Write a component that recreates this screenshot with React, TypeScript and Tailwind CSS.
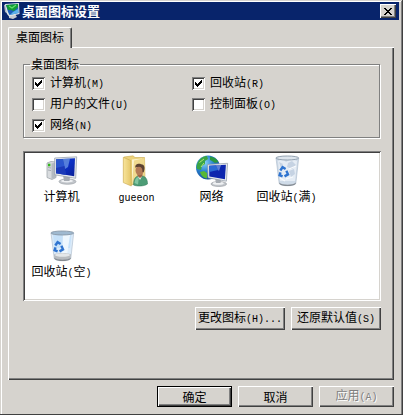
import type { ReactNode } from 'react';
import { clsx } from 'clsx';

const checks = [
  { id: 'computer', text: '计算机', hotkey: '(M)', checked: true },
  { id: 'recycle', text: '回收站', hotkey: '(R)', checked: true },
  { id: 'files', text: '用户的文件', hotkey: '(U)', checked: false },
  { id: 'control', text: '控制面板', hotkey: '(O)', checked: false },
  { id: 'network', text: '网络', hotkey: '(N)', checked: true },
];

function Latin({ children }: { children: ReactNode }) {
  return <span className="font-['Liberation_Mono',monospace] text-[10px]">{children}</span>;
}

function TitleIcon() {
  return (
    <svg viewBox="0 0 16 16" className="w-4 h-4 shrink-0" aria-hidden="true">
      <path d="M5 12 L11 11 L13 14 L9 16 L5 15 Z" fill="#c9ccd0" />
      <path d="M0 2 L3 1 L4 11 L1 9 Z" fill="#aab4c0" />
      <path d="M1 1 L15 0 L15.5 11 L5 13.5 L3 11 Z" fill="#dfe4e8" />
      <path d="M2 2 L14 1 L14.5 10 L5.5 12 L4 9 Z" fill="#1d5fb8" />
      <path d="M2 2 L14 1 L14 4 L10 8 L7 7 L4 7 Z" fill="#119c35" />
      <path d="M5 3 L8 5 L12 2" fill="none" stroke="#5fe36a" strokeWidth="1.3" />
      <path d="M9 9 L14 6 L14.5 10 L6 12 Z" fill="#5bb2ec" />
    </svg>
  );
}

function ComputerIcon() {
  return (
    <svg viewBox="0 0 32 32" className="w-8 h-8" aria-hidden="true">
      <defs>
        <linearGradient id="pc-screen" x1="0" y1="0" x2="1" y2="1">
          <stop offset="0" stopColor="#1238a8" />
          <stop offset="0.5" stopColor="#0b2fc4" />
          <stop offset="1" stopColor="#0a1f96" />
        </linearGradient>
      </defs>
      <path d="M1 8 L5 6.5 L10 7 L10 22.5 L6 24.5 L1 22.5 Z" fill="#d9dcdf" stroke="#979da4" strokeWidth="0.7" />
      <path d="M5.5 8.5 L10 7.5 V22.5 L5.5 24 Z" fill="#b4bac1" />
      <path d="M2 12.5 L5 13 M2 15 L5 15.5" stroke="#8e949b" strokeWidth="0.7" />
      <rect x="2" y="8.7" width="2.4" height="2.6" fill="#33b51b" />
      <ellipse cx="21.5" cy="26.6" rx="8.5" ry="2.7" fill="#c1c5ca" stroke="#92979d" strokeWidth="0.6" />
      <ellipse cx="21" cy="26" rx="6" ry="1.4" fill="#eff1f3" />
      <path d="M17 20 L24 21.5 L23.5 26 L18 26 Z" fill="#a6abb2" />
      <path d="M8.7 3 L30.7 1.8 L29.7 23.3 L8.7 19.8 Z" fill="#e7eaed" stroke="#8f99a6" strokeWidth="0.7" />
      <path d="M10 4.2 L29 3.3 L28.2 21.2 L10 18.3 Z" fill="url(#pc-screen)" />
      <path d="M10 4.2 L17 3.9 L20 20 L10 18.3 Z" fill="#3563d6" opacity="0.75" />
      <path d="M17 3.9 L24 3.6 L22 12 L19 14 Z" fill="#86b2ee" opacity="0.6" />
      <path d="M10 13 L18.5 11 L20 20 L10 18.3 Z" fill="#152fae" opacity="0.7" />
    </svg>
  );
}

function UserIcon() {
  return (
    <svg viewBox="0 0 32 32" className="w-8 h-8" aria-hidden="true">
      <defs>
        <linearGradient id="folder-front" x1="0" y1="0" x2="1" y2="0">
          <stop offset="0" stopColor="#f8e59c" />
          <stop offset="1" stopColor="#e4c567" />
        </linearGradient>
      </defs>
      <path d="M3 2 L12 0.8 L14 2.5 L23.5 2.5 L24 26 L10 30 L3 27 Z" fill="#ecd27c" stroke="#c9a94f" strokeWidth="0.6" />
      <path d="M11 4.5 L21 3.5 L21 23 L11 28 Z" fill="#fbf3cf" />
      <path d="M13 5.5 L23.5 3 L23.5 25 L11 29 Z" fill="#f0da8f" />
      <path d="M2.3 2.3 L9.8 5.5 L10.3 31 L2.3 27.6 Z" fill="url(#folder-front)" stroke="#c9a94f" strokeWidth="0.6" />
      <path d="M12.5 30 C12.5 23 15 20.7 19.5 20.7 C24.5 20.7 26.5 24 26.5 29 C23 31.5 16 31.5 12.5 30 Z" fill="#4d9c76" stroke="#2f7656" strokeWidth="0.5" />
      <path d="M13.5 28 C14 23.5 16 22 18 21.8 L17 29.5 Z" fill="#82c5a1" />
      <path d="M16.5 20.5 L19 25 L21.7 20 Z" fill="#f4efe8" />
      <path d="M16.5 18 H21.5 V21 L19 23 L16.5 21 Z" fill="#9a6444" />
      <ellipse cx="18.5" cy="15.5" rx="4" ry="4.8" fill="#b47b57" />
      <path d="M14.4 13 C13.5 9 18 8.2 20 9.3 C24 9.2 24.3 14 22.5 17.5 L21.5 17 C21.8 13.5 20 11.8 18 11.8 C16 12 15 12 14.4 13 Z" fill="#5c4232" />
    </svg>
  );
}

function NetworkIcon() {
  return (
    <svg viewBox="0 0 32 32" className="w-8 h-8 overflow-visible" aria-hidden="true">
      <defs>
        <radialGradient id="globe" cx="0.35" cy="0.3" r="0.8">
          <stop offset="0" stopColor="#8ed3f7" />
          <stop offset="0.45" stopColor="#2a84d2" />
          <stop offset="1" stopColor="#0d3f8c" />
        </radialGradient>
      </defs>
      <circle cx="12" cy="12.5" r="12" fill="url(#globe)" />
      <path d="M2 7 C4 3 8 1 11 1 L12 4 L9 6 L9 9 L6 11 L5 15 L1 14 C0 11 1 9 2 7 Z" fill="#3aa545" />
      <path d="M14 1.5 C18 2 21 4 22.5 7 L19 8 L16 6 L14 5 Z" fill="#2b9840" />
      <path d="M4 17 L8 16 L11 18 L11 23.5 C8 23.2 5 21 4 17 Z" fill="#58b834" />
      <path d="M3.5 7.5 L8 4 M5 12 L8 8" stroke="#b3e577" strokeWidth="1" />
      <ellipse cx="22.8" cy="29" rx="7.8" ry="2.5" fill="#c1c5ca" stroke="#92979d" strokeWidth="0.6" />
      <ellipse cx="22.3" cy="28.4" rx="5.5" ry="1.3" fill="#eff1f3" />
      <path d="M19 23 L25 24.5 L24.5 28 L20 28 Z" fill="#a6abb2" />
      <path d="M11.7 9.5 L31.6 8.3 L30.4 26.2 L12 22.8 Z" fill="#e7eaed" stroke="#8f99a6" strokeWidth="0.7" />
      <path d="M13.2 10.8 L29.9 9.8 L28.9 24.2 L13.3 21.5 Z" fill="#0d26ae" />
      <path d="M13.2 10.8 L20 10.4 L22 15 L13.3 17 Z" fill="#2b6ad5" />
      <path d="M20 10.4 L25 10.1 L23 16 L22 15 Z" fill="#92baf0" opacity="0.6" />
    </svg>
  );
}

function BinIcon({ full }: { full?: boolean }) {
  return (
    <svg viewBox="0 0 32 32" className="w-8 h-8" aria-hidden="true">
      <path d="M5 3 L27.7 3 L24.8 28.5 C23 31.5 10 31.5 8.2 28.5 Z" fill={full ? '#cfdbe8' : '#dcebf9'} stroke="#a9b9c9" strokeWidth="0.6" />
      {full ? (
        <>
          <path d="M7 6 L12 4 L15 7 L20 4 L26 6 L24 26 L9 26 Z" fill="#e6edf5" />
          <path d="M17 8 L21 6 L25 10 L21 14 L16 12 Z M18 16 L23 14 L24 19 L20 22 Z M8 7 L12 9 L10 13 Z" fill="#c6d3e3" />
          <path d="M18 14 L25 11 M15 24 L22 22 M9 23 L14 26" stroke="#f9fbfd" strokeWidth="1.3" />
        </>
      ) : (
        <>
          <path d="M7 5 L25.5 5 L24 18 L8.5 18 Z" fill="#c6e1f9" />
          <path d="M17 5 L24 5 L21 25 L16 25 Z" fill="#eef7fe" />
          <path d="M8 24.5 C12 22.5 21 22.5 25 24.5 L24.5 28 C21 31 11 31 8.3 28 Z" fill="#b8bcc0" />
          <ellipse cx="16.5" cy="25" rx="7.5" ry="1.7" fill="#e4e7e9" />
        </>
      )}
      <path d="M8.2 27.5 C11 30.5 22 30.5 24.9 27.5 L24.6 29 C22 31.7 11 31.7 8.5 29 Z" fill="#858b92" />
      <ellipse cx="16.3" cy="3" rx="11.4" ry="2" fill={full ? '#dde5ed' : '#9fb9d0'} stroke="#8998a8" strokeWidth="0.9" />
      <g fill="none" stroke="#2f74d0" strokeWidth="2.4">
        <path d="M9.3 15.5 L11.6 12.2 L14.6 14" />
        <path d="M15.4 15.8 L17 19.4 L13.5 21.4" />
        <path d="M11.6 21.3 L8.6 20.2 L9.5 17.3" />
      </g>
    </svg>
  );
}

function CheckItem({ id, text, hotkey, checked }: (typeof checks)[number]) {
  return (
    <div className="flex items-center gap-[5px] h-[21px]">
      <span className="grid shrink-0">
        <input
          id={id}
          type="checkbox"
          defaultChecked={checked}
          className="peer col-start-1 row-start-1 appearance-none w-[13px] h-[13px] bg-white shadow-[inset_1px_1px_#808080,inset_-1px_-1px_#fff,inset_2px_2px_#404040,inset_-2px_-2px_#d6d3ce]"
        />
        <svg
          viewBox="0 0 13 13"
          className="col-start-1 row-start-1 w-[13px] h-[13px] pointer-events-none invisible peer-checked:visible"
          shapeRendering="crispEdges"
          aria-hidden="true"
        >
          <path d="M3 5h1v1h1v1h1v-1h1v-1h1v-1h1v-1h1v3h-1v1h-1v1h-1v1h-1v1h-1v-1h-1v-1h-1z" />
        </svg>
      </span>
      <label htmlFor={id} className="whitespace-nowrap">
        {text}
        <Latin>{hotkey}</Latin>
      </label>
    </div>
  );
}

function DesktopItem({ icon, children }: { icon: ReactNode; children: ReactNode }) {
  return (
    <li className="w-[75px] h-[70px] flex flex-col items-center gap-px">
      {icon}
      <span className="whitespace-nowrap">{children}</span>
    </li>
  );
}

function Button({ className, disabled, primary, children }: { className: string; disabled?: boolean; primary?: boolean; children: ReactNode }) {
  return (
    <button
      type="button"
      disabled={disabled}
      className={clsx(
        'flex items-center justify-center whitespace-nowrap bg-[#d6d3ce] shadow-[inset_1px_1px_#fff,inset_-1px_-1px_#404040,inset_-2px_-2px_#808080]',
        primary && 'border border-black',
        disabled && 'text-[#808080] [text-shadow:1px_1px_#fff]',
        className,
      )}
    >
      <span>{children}</span>
    </button>
  );
}

function App() {
  return (
    <div className="min-h-screen flex flex-col p-[2px] pr-[4px] bg-[#d6d3ce] text-black text-[12px] leading-[16px] font-['Noto_Sans_CJK_SC',sans-serif] shadow-[inset_-1px_-1px_#404040,inset_1px_1px_#d6d3ce,inset_-2px_-1px_#808080,inset_2px_2px_#fff]">
      <header className="flex items-center gap-[2px] h-[18px] pl-[2px] pr-[3px] bg-[#08246b] text-white">
        <TitleIcon />
        <h1 className="flex-1 text-[13px] font-bold">桌面图标设置</h1>
        <button
          type="button"
          aria-label="关闭"
          className="w-4 h-[14px] flex items-center justify-center bg-[#d6d3ce] text-black shadow-[inset_1px_1px_#fff,inset_-1px_-1px_#404040,inset_-2px_-2px_#808080]"
        >
          <svg viewBox="0 0 8 7" className="w-2 h-[7px]" shapeRendering="crispEdges" aria-hidden="true">
            <path d="M0 0h2v1h1v1h2v-1h1v-1h2v1h-1v1h-1v1h-1v1h1v1h1v1h1v1h-2v-1h-1v-1h-2v1h-1v1h-2v-1h1v-1h1v-1h1v-1h-1v-1h-1v-1h-1z" />
          </svg>
        </button>
      </header>

      <main className="flex-1 flex flex-col pt-[7px] pl-[6px] pr-[5px]">
        <div role="tablist" className="flex">
          <button
            type="button"
            role="tab"
            aria-selected="true"
            className="relative z-10 h-[21px] -mb-px px-[7px] pb-[2px] rounded-t-[2px] bg-[#d6d3ce] border-t border-l border-r border-t-white border-l-white border-r-[#404040] shadow-[inset_-1px_0_#808080]"
          >
            桌面图标
          </button>
        </div>

        <section
          role="tabpanel"
          className="flex-1 pl-[15px] pr-[13px] pt-[9px] pb-12 shadow-[inset_1px_1px_#fff,inset_-1px_-1px_#404040,inset_-2px_-2px_#808080]"
        >
          <fieldset className="mr-px px-[8px] pt-px pb-px border border-[#808080] shadow-[1px_1px_#fff,inset_1px_1px_#fff]">
            <legend className="px-px -ml-[2px]">桌面图标</legend>
            <div className="grid grid-cols-[160px_1fr]">
              {checks.map((c) => (
                <CheckItem key={c.id} {...c} />
              ))}
            </div>
          </fieldset>

          <ul className="mt-[13px] min-h-[150px] pt-1 pl-px flex flex-wrap content-start gap-y-[5px] bg-white shadow-[inset_1px_1px_#808080,inset_-1px_-1px_#fff,inset_2px_2px_#404040,inset_-2px_-2px_#d6d3ce]">
            <DesktopItem icon={<ComputerIcon />}>计算机</DesktopItem>
            <DesktopItem icon={<UserIcon />}>
              <Latin>gueeon</Latin>
            </DesktopItem>
            <DesktopItem icon={<NetworkIcon />}>网络</DesktopItem>
            <DesktopItem icon={<BinIcon full />}>
              回收站<Latin>(</Latin>满<Latin>)</Latin>
            </DesktopItem>
            <DesktopItem icon={<BinIcon />}>
              回收站<Latin>(</Latin>空<Latin>)</Latin>
            </DesktopItem>
          </ul>

          <div className="mt-[6px] flex justify-end gap-[6px]">
            <Button className="w-[90px] h-[23px]">
              更改图标<Latin>(H)...</Latin>
            </Button>
            <Button className="w-[90px] h-[23px]">
              还原默认值<Latin>(S)</Latin>
            </Button>
          </div>
        </section>
      </main>

      <footer className="flex justify-end gap-[6px] pt-[6px] pb-[6px] pr-[5px]">
        <Button className="w-[75px] h-[21px]" primary>
          确定
        </Button>
        <Button className="w-[75px] h-[21px]">取消</Button>
        <Button className="w-[75px] h-[21px]" disabled>
          应用<Latin>(A)</Latin>
        </Button>
      </footer>
    </div>
  );
}

export default App;
